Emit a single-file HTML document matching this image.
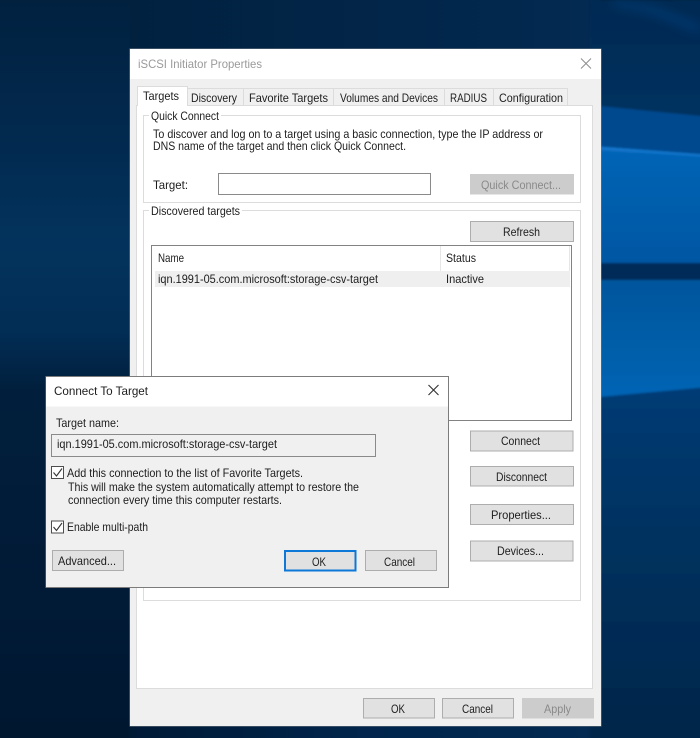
<!DOCTYPE html>
<html><head><meta charset="utf-8"><title>iSCSI Initiator Properties</title>
<style>
html,body{margin:0;padding:0;background:#02254a}
svg{display:block}
text{font-family:"Liberation Sans",sans-serif;font-size:12px;fill:#1e1e1e}
</style></head><body>
<svg width="700" height="738" viewBox="0 0 700 738" xmlns="http://www.w3.org/2000/svg">
<defs>
<linearGradient id="l" x1="0" y1="0" x2="0" y2="1">
<stop offset="0" stop-color="#01213f"/><stop offset=".2" stop-color="#022a50"/><stop offset=".33" stop-color="#03335c"/><stop offset=".45" stop-color="#022d55"/><stop offset=".53" stop-color="#011f3c"/><stop offset=".8" stop-color="#011a36"/><stop offset="1" stop-color="#001730"/>
</linearGradient>
<linearGradient id="t2" x1="0" y1="0" x2="1" y2="0"><stop offset="0" stop-color="#01213f"/><stop offset=".6" stop-color="#02264a"/><stop offset="1" stop-color="#032a52"/></linearGradient>
<linearGradient id="b2" x1="0" y1="0" x2="1" y2="0"><stop offset="0" stop-color="#001a36"/><stop offset=".5" stop-color="#01254c"/><stop offset="1" stop-color="#022a52"/></linearGradient>
<linearGradient id="up" x1="0" y1="0" x2="0" y2="1"><stop offset="0" stop-color="#0766b8"/><stop offset=".25" stop-color="#0561b1"/><stop offset="1" stop-color="#0557a3"/></linearGradient>
<linearGradient id="lo" x1="0" y1="0" x2="0" y2="1"><stop offset="0" stop-color="#05569d"/><stop offset=".6" stop-color="#055ea9"/><stop offset="1" stop-color="#0665b6"/></linearGradient>
<linearGradient id="bot" x1="0" y1="0" x2="0" y2="1"><stop offset="0" stop-color="#043b75"/><stop offset=".5" stop-color="#03305c"/><stop offset="1" stop-color="#022548"/></linearGradient>
<linearGradient id="top" x1="0" y1="0" x2="0" y2="1"><stop offset="0" stop-color="#032a52"/><stop offset="1" stop-color="#033160"/></linearGradient>
<filter id="s" x="0" y="0" width="1" height="1"><feGaussianBlur stdDeviation="0.25"/></filter>
<filter id="w" x="-5%" y="-5%" width="110%" height="110%"><feGaussianBlur stdDeviation="1"/></filter>
<filter id="w2" x="-20%" y="-20%" width="140%" height="140%"><feGaussianBlur stdDeviation="5"/></filter>
</defs>

<!-- wallpaper -->
<rect width="700" height="738" fill="url(#l)"/>
<rect x="130" y="0" width="470" height="49" fill="url(#t2)"/>
<rect x="130" y="726" width="470" height="12" fill="url(#b2)"/>
<g filter="url(#w)">
<polygon points="590,0 710,0 710,117 590,105" fill="url(#top)"/>
<polygon points="590,105 710,117 710,156 590,147" fill="#054a8f"/>
<polygon points="590,146 710,155 710,264 590,264" fill="url(#up)"/>
<polygon points="590,146 710,155 710,157 590,149" fill="#1478cf"/>
<rect x="590" y="263" width="120" height="17" fill="#022c58"/>
<polygon points="590,280 710,280 710,387 590,398" fill="url(#lo)"/>
<polygon points="590,398 710,387 710,748 590,748" fill="url(#bot)"/>
</g>
<polygon points="610,6 650,14 700,34 700,24 655,6 615,0" fill="#044380" opacity=".55" filter="url(#w2)"/>

<!-- main window -->
<g filter="url(#s)">
<rect x="129.500" y="48.500" width="472" height="678" fill="#6f7a84"/>
<rect x="130" y="49" width="471" height="677" fill="#f0f0f0"/>
<rect x="130" y="49" width="471" height="30" fill="#fff"/>
<text x="138" y="68" textLength="124" lengthAdjust="spacingAndGlyphs" style="fill:#9a9a9a">iSCSI Initiator Properties</text>
<path d="M581 58.500L591 68.500M591 58.500L581 68.500" stroke="#8d8d8d" stroke-width="1" fill="none"/>

<!-- tab pane -->
<rect x="136.500" y="105.500" width="456" height="583" fill="#fff" stroke="#dcdcdc"/>
<!-- tabs -->
<g fill="#f0f0f0" stroke="#dcdcdc">
<rect x="187.500" y="88.500" width="56" height="17"/>
<rect x="243.500" y="88.500" width="90" height="17"/>
<rect x="333.500" y="88.500" width="111" height="17"/>
<rect x="444.500" y="88.500" width="49" height="17"/>
<rect x="493.500" y="88.500" width="74" height="17"/>
</g>
<path d="M137.500 106V86.500H187.500V106" fill="#fff" stroke="#dcdcdc"/>
<rect x="138" y="104" width="49" height="3" fill="#fff"/>
<text x="143" y="100" textLength="36" lengthAdjust="spacingAndGlyphs">Targets</text>
<text x="191" y="102" textLength="46" lengthAdjust="spacingAndGlyphs">Discovery</text>
<text x="249" y="102" textLength="79" lengthAdjust="spacingAndGlyphs">Favorite Targets</text>
<text x="340" y="102" textLength="98" lengthAdjust="spacingAndGlyphs">Volumes and Devices</text>
<text x="450" y="102" textLength="37" lengthAdjust="spacingAndGlyphs">RADIUS</text>
<text x="499" y="102" textLength="64" lengthAdjust="spacingAndGlyphs">Configuration</text>

<!-- quick connect group -->
<rect x="143.500" y="115.500" width="437" height="87" fill="#fff" stroke="#dcdcdc"/>
<rect x="149" y="112" width="72" height="8" fill="#fff"/>
<text x="151" y="120" textLength="68" lengthAdjust="spacingAndGlyphs">Quick Connect</text>
<text x="153" y="138" textLength="390" lengthAdjust="spacingAndGlyphs">To discover and log on to a target using a basic connection, type the IP address or</text>
<text x="153" y="150" textLength="253" lengthAdjust="spacingAndGlyphs">DNS name of the target and then click Quick Connect.</text>
<text x="153" y="189" textLength="35" lengthAdjust="spacingAndGlyphs">Target:</text>
<rect x="218.500" y="173.500" width="212" height="21" fill="#fff" stroke="#8a8a8a"/>
<rect x="470" y="174" width="104" height="20.500" fill="#cccccc"/>
<text x="481" y="189" textLength="80" lengthAdjust="spacingAndGlyphs" style="fill:#8a8a8a">Quick Connect...</text>

<!-- discovered group -->
<rect x="143.500" y="210.500" width="437" height="390" fill="#fff" stroke="#dcdcdc"/>
<rect x="149" y="206" width="93" height="9" fill="#fff"/>
<text x="151" y="215" textLength="89" lengthAdjust="spacingAndGlyphs">Discovered targets</text>
<rect x="470.500" y="221.500" width="103" height="20" fill="#e1e1e1" stroke="#adadad"/>
<text x="503" y="236" textLength="37" lengthAdjust="spacingAndGlyphs">Refresh</text>

<!-- list -->
<rect x="151.500" y="245.500" width="420" height="175" fill="#fff" stroke="#828282"/>
<rect x="155" y="271" width="415" height="16" fill="#efefef"/>
<path d="M440.500 246V271" stroke="#e6e6e6"/>
<path d="M569.500 246V271" stroke="#e6e6e6"/>
<text x="158" y="262" textLength="26" lengthAdjust="spacingAndGlyphs">Name</text>
<text x="446" y="262" textLength="30" lengthAdjust="spacingAndGlyphs">Status</text>
<text x="158" y="283" textLength="220" lengthAdjust="spacingAndGlyphs">iqn.1991-05.com.microsoft:storage-csv-target</text>
<text x="446" y="283" textLength="38" lengthAdjust="spacingAndGlyphs">Inactive</text>

<!-- side buttons -->
<g fill="#e1e1e1" stroke="#adadad">
<rect x="470.500" y="431" width="102.500" height="20"/>
<rect x="470.500" y="466.500" width="103" height="19.500"/>
<rect x="470.500" y="504.500" width="103" height="20"/>
<rect x="470.500" y="541" width="102.500" height="20"/>
</g>
<text x="501" y="445" textLength="39" lengthAdjust="spacingAndGlyphs">Connect</text>
<text x="496" y="481" textLength="51" lengthAdjust="spacingAndGlyphs">Disconnect</text>
<text x="491" y="519" textLength="60" lengthAdjust="spacingAndGlyphs">Properties...</text>
<text x="497" y="555" textLength="47" lengthAdjust="spacingAndGlyphs">Devices...</text>

<!-- bottom buttons -->
<g fill="#e1e1e1" stroke="#adadad">
<rect x="363.500" y="698.500" width="71" height="19.500"/>
<rect x="442.500" y="698.500" width="71" height="19.500"/>
</g>
<rect x="522" y="698" width="72" height="20.500" fill="#cccccc"/>
<text x="391" y="713" textLength="14" lengthAdjust="spacingAndGlyphs">OK</text>
<text x="462" y="713" textLength="31" lengthAdjust="spacingAndGlyphs">Cancel</text>
<text x="544" y="713" textLength="27" lengthAdjust="spacingAndGlyphs" style="fill:#8a8a8a">Apply</text>

<!-- connect dialog -->
<rect x="45.500" y="376.500" width="403" height="211" fill="#f0f0f0" stroke="#7c7c7c"/>
<rect x="46" y="377" width="402" height="29.500" fill="#fff"/>
<text x="54" y="395" textLength="94" lengthAdjust="spacingAndGlyphs">Connect To Target</text>
<path d="M428.500 385L438.500 395M438.500 385L428.500 395" stroke="#303030" stroke-width="1.100" fill="none"/>
<text x="56" y="427" textLength="63" lengthAdjust="spacingAndGlyphs">Target name:</text>
<rect x="51.500" y="434.500" width="324" height="22" fill="#f0f0f0" stroke="#8a8a8a"/>
<text x="57" y="448" textLength="220" lengthAdjust="spacingAndGlyphs">iqn.1991-05.com.microsoft:storage-csv-target</text>

<rect x="51.500" y="466.500" width="12" height="12" fill="#fff" stroke="#4d4d4d"/>
<path d="M53.500 472.500L56.500 476L62 468.500" fill="none" stroke="#333" stroke-width="1.100"/>
<text x="67" y="477" textLength="236" lengthAdjust="spacingAndGlyphs">Add this connection to the list of Favorite Targets.</text>
<text x="68" y="491" textLength="291" lengthAdjust="spacingAndGlyphs">This will make the system automatically attempt to restore the</text>
<text x="68" y="504" textLength="214" lengthAdjust="spacingAndGlyphs">connection every time this computer restarts.</text>

<rect x="51.500" y="521" width="12" height="12" fill="#fff" stroke="#4d4d4d"/>
<path d="M53.500 527L56.500 530.500L62 523" fill="none" stroke="#333" stroke-width="1.100"/>
<text x="67" y="531" textLength="81" lengthAdjust="spacingAndGlyphs">Enable multi-path</text>

<rect x="52.500" y="550.500" width="71" height="20" fill="#e1e1e1" stroke="#adadad"/>
<text x="58" y="565" textLength="58" lengthAdjust="spacingAndGlyphs">Advanced...</text>
<rect x="285" y="551" width="70.500" height="19.500" fill="#e1e1e1" stroke="#0a78d7" stroke-width="2"/>
<text x="312" y="566" textLength="14" lengthAdjust="spacingAndGlyphs">OK</text>
<rect x="365.500" y="550.500" width="71" height="20" fill="#e1e1e1" stroke="#adadad"/>
<text x="384" y="566" textLength="31" lengthAdjust="spacingAndGlyphs">Cancel</text>
</g>
</svg>
</body></html>
